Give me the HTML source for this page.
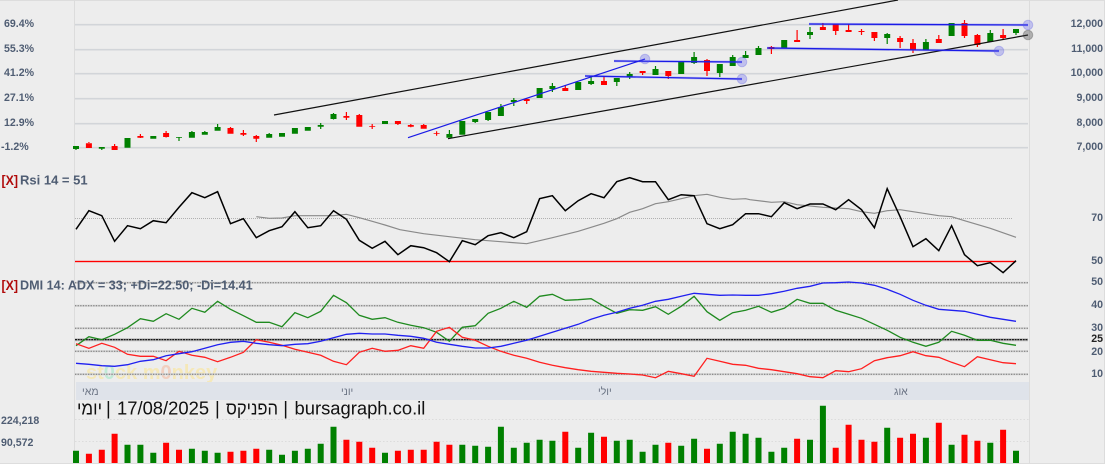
<!DOCTYPE html>
<html lang="he"><head><meta charset="utf-8"><title>bursagraph</title>
<style>
html,body{margin:0;padding:0;background:#ededed;width:1105px;height:464px;overflow:hidden}
svg{display:block;position:absolute;left:0;top:0}
text{font-family:"Liberation Sans","Noto Sans CJK JP",sans-serif}
.l{font-size:10.6px;font-weight:bold;fill:#4f5d73}
.r{font-size:10.6px;font-weight:bold;fill:#4f5d73;text-anchor:end}
.h{font-size:13px;font-weight:bold;fill:#4f5d73}
.x{font-size:14px;font-weight:bold;fill:#b00a0a}
.m{font-size:10.5px;fill:#6b7484}
.t{font-size:18.4px;fill:#111}
.p{fill:none}
</style></head><body>
<svg width="1105" height="464" viewBox="0 0 1105 464" xmlns="http://www.w3.org/2000/svg">
<rect width="1105" height="464" fill="#ededed"/>
<path d="M0 .5H1105M0 463.5H1105" stroke="#dddddd" fill="none"/>
<path d="M74.5 0V464M1029.5 0V464M1104.5 0V464" stroke="#dcdcdc" fill="none"/>

<!-- price grid -->
<path d="M75 24.7H1028M75 49.7H1028M75 73.7H1028M75 98.7H1028M75 123.7H1028M75 147.7H1028" stroke="#d2d5d9" stroke-width="1.6" fill="none"/>

<!-- candle wicks -->
<path class="p" stroke="#008000" stroke-width="1.2" d="M76 146V150M101.8 147V150M179 137V141M191.9 131V132M204.8 131V132M217.6 124V127M269.2 133V134M320.7 123V129M333.5 113V119.5M449.4 130V134M475.2 122V123M488.1 120V121M500.9 104V107M513.8 98V106M552.4 83V92M591.1 77V85M616.8 82V86M629.7 72V79M655.5 66V69M694.1 52V64M719.8 73V77M732.7 55V57M745.6 51V55M758.5 46V48M810 27V39M887.2 33V44M925.9 39V42M990.3 30V33M1016 33V35"/>
<path class="p" stroke="#ff0000" stroke-width="1.2" d="M88.9 142V143M114.6 144V146M140.4 134V138M166.1 131V137.5M230.5 127V128M243.4 130V136M256.3 135V142M346.4 112V120M359.3 114V115M372.2 124V129M397.9 124V125M410.8 124V127.3M423.7 124V125M436.6 131.3V135.7M526.7 98V104M565.3 85V88M604 77V81M642.6 73V75M668.3 76V79M707 59V76M771.4 46V54M797.1 30V40M822.9 23V27M835.7 31V35M848.6 24V30M861.5 29V35M874.4 38V41M900.1 36V48M913 39V53M938.8 35V39M964.5 20V38M977.4 34V47M1003.1 29V40"/>
<!-- bodies -->
<path class="p" stroke="#008000" stroke-width="6" d="M76 146V149M101.8 147V148.7M127.5 138V147.7M153.3 136V138.7M179 137V137.8M191.9 132V137.7M204.8 132V134.7M217.6 127V130.7M269.2 134V137.7M282 133V136.7M294.9 128V133.7M307.8 127V130.7M320.7 125V126.7M333.5 114V119M385 121V124M449.4 134V137.7M462.3 121V134.7M475.2 119V122M488.1 112V120M500.9 107V116M513.8 100V102M539.6 88V98M552.4 86V89M578.2 82V90M591.1 81V84M616.8 78V82M629.7 74V77M655.5 69V75M681.2 62V74M694.1 57V63M719.8 64V73M732.7 57V66M745.6 55V58M758.5 48V55M784.2 40V48M810 32V35M887.2 34V38M925.9 42V50M951.6 23V36M990.3 33V42M1016 29V33"/>
<path class="p" stroke="#ff0000" stroke-width="6" d="M88.9 143.3V148M114.6 146V150M140.4 136V137.7M166.1 133V137M230.5 128V133.7M243.4 133V134.7M256.3 136V138.7M346.4 116V117.7M359.3 115V126.7M372.2 126V126.8M397.9 121V124M410.8 125V126.7M423.7 125V128.7M436.6 133V133.8M526.7 99V101M565.3 88V91M604 81V85M642.6 71V73M668.3 71V76M707 60V71M771.4 47V49M797.1 40V42M822.9 27V30M835.7 24V31M848.6 30V32M861.5 31V32M874.4 32V38M900.1 38V42M913 43V50M938.8 39V43M964.5 23V36M977.4 35V45M1003.1 35V38"/>

<!-- channels -->
<path class="p" stroke="#111" stroke-width="1.2" d="M274 115L898 0M448 138.7L1028 35"/>
<!-- blue trend lines -->
<g class="p" fill="none">
<path stroke="rgba(60,60,255,.3)" stroke-width="2.4" d="M614 61L742 62M585 76L742 79M809 24L1028 25M767 48L999 51"/>
<path stroke="#1a1ae6" stroke-width="1.2" d="M408 137.7L645 59M614 61L742 62M585 76L742 79M809 24L1028 25M767 48L999 51"/>
</g>
<g stroke="rgba(90,90,230,.3)" stroke-width="1">
<circle cx="645" cy="59" r="4.8" fill="rgba(90,90,240,.3)"/>
<circle cx="742" cy="62" r="4.8" fill="rgba(90,90,240,.3)"/>
<circle cx="742" cy="79" r="4.8" fill="rgba(90,90,240,.3)"/>
<circle cx="1028" cy="25" r="4.8" fill="rgba(90,90,240,.3)"/>
<circle cx="999" cy="51" r="4.8" fill="rgba(90,90,240,.3)"/>
</g>
<circle cx="1028" cy="35" r="4.8" fill="rgba(60,60,60,.35)" stroke="rgba(60,60,60,.3)"/>

<!-- left price labels -->
<g class="l">
<text class="l" x="4" y="27">69.4%</text>
<text class="l" x="4" y="52">55.3%</text>
<text class="l" x="4" y="76">41.2%</text>
<text class="l" x="4" y="101">27.1%</text>
<text class="l" x="4" y="126">12.9%</text>
<text class="l" x="1" y="150">-1.2%</text>
</g>
<g>
<text class="r" x="1103" y="27">12,000</text>
<text class="r" x="1103" y="52">11,000</text>
<text class="r" x="1103" y="76">10,000</text>
<text class="r" x="1103" y="101">9,000</text>
<text class="r" x="1103" y="126">8,000</text>
<text class="r" x="1103" y="150">7,000</text>
<text class="r" x="1103" y="221">70</text>
<text class="r" x="1103" y="264">50</text>
<text class="r" x="1103" y="285">50</text>
<text class="r" x="1103" y="308">40</text>
<text class="r" x="1103" y="331">30</text>
<text class="r" x="1103" y="342" style="fill:#222">25</text>
<text class="r" x="1103" y="355">20</text>
<text class="r" x="1103" y="377">10</text>
</g>

<!-- RSI -->
<path class="p" stroke="#b0b0b0" stroke-width="1" stroke-dasharray="1 1" d="M75 218.5H1013"/>
<path class="p" stroke="rgba(255,0,0,.25)" stroke-width="2.6" d="M75 261.5H1016"/>
<path class="p" stroke="#ff0000" stroke-width="1" d="M75 261.5H1016"/>
<polyline class="p" stroke="#8a8a8a" stroke-width="1.2" points="256.3,216.7 269.2,218.3 282,218 294.9,215.7 320.7,215.7 333.5,215.7 346.4,214.3 359.3,217.7 372.2,221.3 385,225 400,229.7 423.7,233.7 449.4,236.7 475.2,239.7 500.9,241.7 526.7,243.7 552.4,237.7 578.2,231.3 604,223.3 616.8,218.7 629.7,212.3 642.6,208.7 655.5,203.7 668.3,201.7 694.1,195.7 707,194.3 719.8,197.3 732.7,199.3 745.6,198.7 750,199.7 771.4,202.3 784.2,201.7 797.1,204.7 822.9,207.3 848.6,208.7 861.5,211.7 874.4,213.3 887.2,210.7 900.1,209.7 913,211.7 938.8,215.7 951.6,216.7 964.5,220.7 990.3,228.3 1016,237.3"/>
<polyline class="p" stroke="#000" stroke-width="1.5" stroke-linejoin="miter" points="76,229.3 88.9,210.7 101.8,215.7 114.6,241.3 127.5,225.7 140.4,228.7 153.3,220.7 166.1,222.7 179,207.3 191.9,192.7 204.8,197.7 217.6,191.7 230.5,223.7 243.4,218.7 256.3,237.7 269.2,230.7 282,226.7 294.9,211.7 307.8,227.7 320.7,225.7 333.5,210.7 346.4,219.3 359.3,240.3 372.2,248.3 385,241.3 397.9,254.7 410.8,245.7 423.7,247.7 436.6,252.7 449.4,261.7 462.3,240.7 475.2,244.7 488.1,235.7 500.9,232.7 513.8,237.7 526.7,231.7 539.6,198.7 552.4,195.7 565.3,210.7 578.2,200.7 591.1,193.7 604,197.7 616.8,181.7 629.7,177.7 642.6,181.7 655.5,181.7 668.3,199.7 681.2,194.7 694.1,195.7 707,223.7 719.8,228.7 732.7,224.7 745.6,213.7 758.5,213.7 771.4,216.7 784.2,202.7 797.1,208.7 810,204 822.9,204 835.7,209.7 848.6,199.7 861.5,209.7 874.4,227.7 887.2,188.7 900.1,216.7 913,246.7 925.9,238.7 938.8,250.7 951.6,225.7 964.5,254.7 977.4,265.7 990.3,262.7 1003.1,272.7 1016,260.7"/>
<text class="x" x="1.5" y="185" textLength="16.5" lengthAdjust="spacingAndGlyphs">[X]</text>
<text class="h" x="20" y="184.5">Rsi 14 = 51</text>

<!-- DMI watermark -->
<text x="86" y="379" style="font-size:20px;font-weight:bold;fill:#f5e8b8">st<tspan style="fill:#c0ead6">0</tspan>ck m<tspan style="fill:#f1cfc0">0</tspan>nkey</text>
<!-- DMI grid -->
<path class="p" stroke="#d4d4d4" stroke-width="2" d="M75 282.7H1028M75 305.7H1028M75 328.3H1028M75 351.3H1028M75 374.3H1028"/>
<path class="p" stroke="#757575" stroke-width="1" stroke-dasharray="1.3 1.3" d="M75 282.7H1028M75 305.7H1028M75 328.3H1028M75 351.3H1028M75 374.3H1028"/>
<path class="p" stroke="#bdbdbd" stroke-width="3" d="M75 339.7H1028"/>
<path class="p" stroke="#000" stroke-width="1.2" stroke-dasharray="2 .7" d="M75 339.7H1028"/>
<polyline class="p" stroke="#1f8a1f" stroke-width="1.3" points="76,345.7 88.9,336.7 101.8,339.7 114.6,334.3 127.5,327.7 140.4,318.7 153.3,321.3 166.1,313.7 179,319.3 191.9,308.3 204.8,312.3 217.6,301.3 230.5,309.3 243.4,315.7 256.3,322.3 269.2,322.3 282,326.7 294.9,312.7 307.8,317.7 320.7,311.3 333.5,295.3 346.4,302.7 359.3,315.3 372.2,319.3 385,317.7 397.9,322.3 410.8,325.3 423.7,327.7 436.6,332.3 449.4,341.3 462.3,327.3 475.2,325.7 488.1,313.3 500.9,308.3 513.8,301.3 526.7,307.3 539.6,296.3 552.4,294.3 565.3,300.3 578.2,299.7 591.1,298.7 604,306.3 616.8,313.3 629.7,309.7 642.6,310.3 655.5,306.7 668.3,314.3 681.2,306.3 694.1,296.3 707,311.7 719.8,320.3 732.7,312.7 745.6,310.3 758.5,306.3 771.4,312.3 784.2,308.3 797.1,299.3 810,303.3 822.9,303.3 835.7,310.3 848.6,314.3 861.5,318.3 874.4,324.3 887.2,330.3 900.1,337.3 913,342.3 925.9,346.3 938.8,342.3 951.6,331.3 964.5,335.3 977.4,340.3 990.3,340.3 1003.1,343.3 1016,345.3"/>
<polyline class="p" stroke="#ff2020" stroke-width="1.3" points="76,343.7 88.9,348.3 101.8,343.3 114.6,347.3 127.5,354.3 140.4,356.3 153.3,356.3 166.1,360.7 179,351.3 191.9,355.3 204.8,357.3 217.6,361.7 230.5,357.3 243.4,352.3 256.3,339.7 269.2,342.3 282,345.3 294.9,349.3 307.8,352.3 320.7,355.3 333.5,361.3 346.4,364.7 359.3,352.3 372.2,348.3 385,351.3 397.9,350.3 410.8,345.7 423.7,348.3 436.6,331.3 449.4,327.3 462.3,337.3 475.2,340.3 488.1,346.3 500.9,351.3 513.8,355.3 526.7,358.3 539.6,362.3 552.4,365.3 565.3,367.7 578.2,369.7 591.1,371.3 604,372.3 616.8,373.3 629.7,374 642.6,375 655.5,377.7 668.3,371.3 681.2,373.7 694.1,376.3 707,358.3 719.8,361.3 732.7,364.3 745.6,365.3 758.5,368.3 771.4,369.7 784.2,371.7 797.1,373.7 810,376.7 822.9,377.7 835.7,370.7 848.6,371.7 861.5,368.7 874.4,360.7 887.2,357.7 900.1,355.7 913,351.7 925.9,355.7 938.8,357.3 951.6,362.3 964.5,366.7 977.4,356.7 990.3,359.7 1003.1,362.7 1016,363.7"/>
<polyline class="p" stroke="#2020f0" stroke-width="1.3" points="76,363.3 88.9,364.3 101.8,365.7 114.6,366.3 127.5,364.7 140.4,361.3 153.3,359.7 166.1,355.7 179,353.7 191.9,351.7 204.8,348.3 217.6,344.7 230.5,342.3 243.4,341.3 256.3,343.3 269.2,344.7 282,345.7 294.9,344.3 307.8,343.7 320.7,341.3 333.5,337.7 346.4,334.3 359.3,333.3 372.2,334 385,334 397.9,335.3 410.8,336.3 423.7,338.3 436.6,342.3 449.4,344.3 462.3,346.3 475.2,348 488.1,348 500.9,346.3 513.8,343.3 526.7,340.3 539.6,336.3 552.4,332.3 565.3,328.3 578.2,324.3 591.1,319.3 604,315.3 616.8,312.3 629.7,308.3 642.6,305.3 655.5,301.3 668.3,299.3 681.2,296.3 694.1,293.3 707,294.3 719.8,295.3 732.7,295 745.6,295.3 758.5,295.3 771.4,293.7 784.2,291.3 797.1,288.3 810,286.3 822.9,283 835.7,282.7 848.6,282 861.5,283 874.4,285.3 887.2,289.3 900.1,294.3 913,300.3 925.9,305.3 938.8,309.3 951.6,310.3 964.5,311.3 977.4,314.3 990.3,317.3 1003.1,319.3 1016,321.3"/>
<text class="x" x="1.5" y="290" textLength="16.5" lengthAdjust="spacingAndGlyphs">[X]</text>
<text class="h" x="20" y="289.5" style="font-size:12.6px">DMI 14: ADX = 33; +Di=22.50; -Di=14.41</text>

<!-- date band -->
<rect x="76" y="382" width="953" height="18" fill="#dfe3ea"/>
<text class="m" x="82" y="395">מאי</text>
<text class="m" x="341" y="395">יוני</text>
<text class="m" x="598" y="395">יולי</text>
<text class="m" x="894" y="395">אוג</text>

<!-- title -->
<text class="t" x="77" y="414.5" textLength="25" lengthAdjust="spacingAndGlyphs">יומי</text>
<text class="t" x="106" y="414.5">|</text>
<text class="t" x="117" y="414.5">17/08/2025</text>
<text class="t" x="215" y="414.5">|</text>
<text class="t" x="226" y="414.5" textLength="52" lengthAdjust="spacingAndGlyphs">הפניקס</text>
<text class="t" x="283.3" y="414.5">|</text>
<text class="t" x="294.5" y="414.5">bursagraph.co.il</text>

<!-- volume -->
<path class="p" stroke="#dcdcdc" stroke-width="1" stroke-dasharray="1.5 2" d="M75 419.5H1029M75 441.5H1029"/>
<text class="l" x="1" y="424">224,218</text>
<text class="l" x="1" y="446">90,572</text>
<path class="p" stroke="#008000" stroke-width="6" d="M76 450.7V463M127.5 444.7V463M140.4 444.7V463M153.3 452.7V463M191.9 448.7V463M204.8 450.7V463M217.6 452.7V463M269.2 449.7V463M282 454.7V463M294.9 450.7V463M307.8 448.7V463M320.7 443.7V463M333.5 426.7V463M385 452.7V463M462.3 444.7V463M475.2 445.7V463M488.1 446.7V463M500.9 426.7V463M513.8 447.7V463M526.7 442.7V463M539.6 439.7V463M552.4 440.7V463M578.2 447.7V463M591.1 432.7V463M616.8 440.7V463M629.7 439.7V463M642.6 451.7V463M655.5 444.7V463M681.2 445.7V463M694.1 438.7V463M719.8 443.7V463M732.7 431.7V463M745.6 433.7V463M758.5 437.7V463M771.4 451.7V463M784.2 447.7V463M810 439.7V463M822.9 405.7V463M887.2 427.7V463M925.9 437.7V463M951.6 444.7V463M990.3 442.7V463M1016 450.7V463"/>
<path class="p" stroke="#ff0000" stroke-width="6" d="M88.9 453.7V463M101.8 449.7V463M114.6 433.7V463M166.1 442.7V463M179 449.7V463M230.5 451.7V463M243.4 450.7V463M256.3 448.7V463M346.4 439.7V463M359.3 441.7V463M372.2 447.7V463M397.9 450.7V463M410.8 449.7V463M423.7 449.7V463M436.6 441.7V463M449.4 444.7V463M565.3 431.7V463M604 436.7V463M668.3 442.7V463M707 448.7V463M797.1 438.7V463M835.7 447.7V463M848.6 424.7V463M861.5 439.7V463M874.4 441.7V463M900.1 437.7V463M913 433.7V463M938.8 422.7V463M964.5 434.7V463M977.4 440.7V463M1003.1 429.7V463"/>
</svg>
</body></html>
